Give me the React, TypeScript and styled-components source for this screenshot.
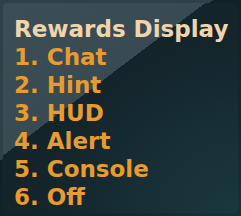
import React from "react";
import styled, { createGlobalStyle } from "styled-components";

const GlobalStyle = createGlobalStyle`
  html, body {
    margin: 0;
    padding: 0;
    background: #13262b;
  }
`;

const Frame = styled.div`
  width: 241px;
  height: 216px;
  box-sizing: border-box;
  padding: 3px;
  background: linear-gradient(143deg, #2f4148 0%, #2f4148 40.4%, #112026 40.4%, #13282d 75%, #163238 100%);
`;

const Panel = styled.div`
  height: 100%;
  box-sizing: border-box;
  border-radius: 4px;
  padding: 12px 0 0 11px;
  background:
    radial-gradient(ellipse at 100% 100%, rgba(30, 70, 76, 0.55) 0%, rgba(30, 70, 76, 0) 60%),
    linear-gradient(143deg, #3b4d55 0%, #384a52 39.4%, #13242a 39.4%, #14272d 100%);
  font-family: "DejaVu Sans", "Liberation Sans", sans-serif;
  font-weight: bold;
  font-size: 23px;
  line-height: 28px;
`;

const Title = styled.div`
  color: #f0d4ae;
  white-space: nowrap;
`;

const Option = styled.div`
  color: #e89b2f;
  white-space: nowrap;
`;

const options = ["Chat", "Hint", "HUD", "Alert", "Console", "Off"];

const App = (): JSX.Element => {
  return (
    <React.Fragment>
      <GlobalStyle />
      <Frame>
        <Panel>
          <Title>Rewards Display</Title>
          {options.map((name, i) => (
            <Option key={name}>
              {i + 1}. {name}
            </Option>
          ))}
        </Panel>
      </Frame>
    </React.Fragment>
  );
};

export default App;
